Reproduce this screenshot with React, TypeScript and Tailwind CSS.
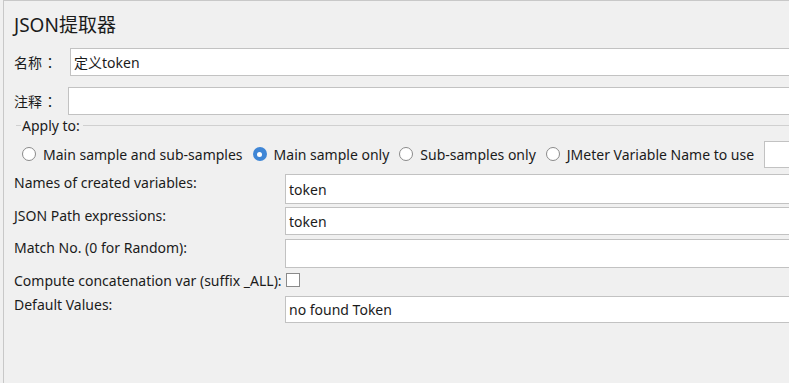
const font = { fontFamily: '"Noto Sans", "Noto Sans CJK SC", sans-serif' };
const cjk = { fontFamily: '"Noto Sans CJK SC", sans-serif' };
const colon = { fontFamily: '"Noto Sans CJK JP", sans-serif' };

function Radio({ checked }: { checked?: boolean }) {
  if (checked) {
    return (
      <span className="w-[14px] h-[14px] rounded-full bg-[#3f86d6] flex items-center justify-center shrink-0">
        <span className="w-[5px] h-[5px] rounded-full bg-white" />
      </span>
    );
  }
  return <span className="w-[14px] h-[14px] rounded-full border border-[#8a8a8a] bg-white shrink-0" />;
}

function Field({ label, value, h, mt }: { label: string; value?: string; h: string; mt: string }) {
  return (
    <div className={`flex items-start ${mt}`}>
      <div className="w-[271px] shrink-0 leading-[18px] whitespace-nowrap">{label}</div>
      <div className={`flex-1 ${h} bg-white border border-[#c2c2c2] flex items-center pl-[3px]`}>{value}</div>
    </div>
  );
}

export default function App() {
  return (
    <div className="w-[789px] h-[383px] overflow-hidden bg-[#f0f0f0] text-[14px] text-[#1b1b1b]" style={font}>
      <div className="ml-[3px] h-full w-[800px] border-l border-t border-[#c8c8c8] pl-[10px]">
        <div className="pt-[12px] h-[36px] text-[19px] leading-[24px]">JSON提取器</div>

        <div className="flex items-center mt-[11px]">
          <div className="w-[56px] shrink-0" style={cjk}>
            名称<span className="ml-[1px]" style={colon}>：</span>
          </div>
          <div className="flex-1 h-[28px] bg-white border border-[#c2c2c2] flex items-center pl-[3px]">定义token</div>
        </div>
        <div className="flex items-center mt-[11px]">
          <div className="w-[54px] shrink-0" style={cjk}>
            注释<span className="ml-[1px]" style={colon}>：</span>
          </div>
          <div className="flex-1 h-[28px] bg-white border border-[#c2c2c2]" />
        </div>

        {/* titled border: Apply to */}
        <div className="flex items-center mt-[1px] h-[18px]">
          <div className="w-[5px] h-px bg-[#d0d0d0] ml-[2px]" />
          <span className="px-[1px]">Apply to:</span>
          <div className="flex-1 h-px bg-[#d0d0d0] ml-[2px]" />
        </div>

        <div className="flex items-center mt-[6px] h-[28px] pl-[8px] whitespace-nowrap">
          <Radio />
          <span className="ml-[7px] mr-[10px]">Main sample and sub-samples</span>
          <Radio checked />
          <span className="ml-[7px] mr-[10px]">Main sample only</span>
          <Radio />
          <span className="ml-[7px] mr-[10px]">Sub-samples only</span>
          <Radio />
          <span className="ml-[7px] mr-[10px]">JMeter Variable Name to use</span>
          <div className="w-[60px] shrink-0 h-[27px] bg-white border border-[#c2c2c2]" />
        </div>

        <Field label="Names of created variables:" value="token" h="h-[30px]" mt="mt-[6px]" />
        <Field label="JSON Path expressions:" value="token" h="h-[28px]" mt="mt-[3px]" />
        <Field label="Match No. (0 for Random):" h="h-[29px]" mt="mt-[4px]" />

        <div className="flex items-center mt-[4px] h-[16px] whitespace-nowrap">
          <span>Compute concatenation var (suffix _ALL):</span>
          <span className="ml-[4px] w-[14px] h-[14px] border border-[#8a8a8a] bg-white" />
        </div>

        <Field label="Default Values:" value="no found Token" h="h-[27px]" mt="mt-[8px]" />
      </div>
    </div>
  );
}
